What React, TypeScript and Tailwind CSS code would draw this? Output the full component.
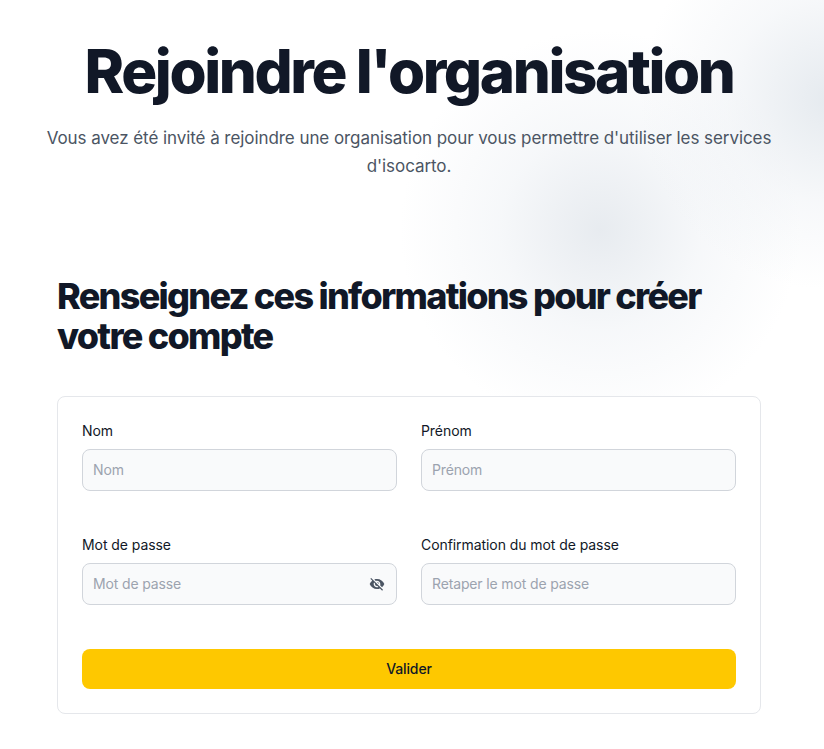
import React from "react";

function EyeOff() {
  return (
    <svg viewBox="0 0 24 24" className="h-4 w-4 text-[#4b5563]" fill="currentColor" aria-hidden="true">
      <path d="M12 7c2.76 0 5 2.24 5 5 0 .65-.13 1.26-.36 1.83l2.92 2.92c1.51-1.26 2.7-2.89 3.43-4.75-1.73-4.39-6-7.5-11-7.5-1.4 0-2.74.25-3.98.7l2.16 2.16C10.74 7.13 11.35 7 12 7zM2 4.27l2.28 2.28.46.46C3.08 8.3 1.78 10.02 1 12c1.73 4.39 6 7.5 11 7.5 1.55 0 3.03-.3 4.38-.84l.42.42L19.73 22 21 20.73 3.27 3 2 4.27zM7.53 9.8l1.55 1.55c-.05.21-.08.43-.08.65 0 1.66 1.34 3 3 3 .22 0 .44-.03.65-.08l1.55 1.55c-.67.33-1.41.53-2.2.53-2.76 0-5-2.24-5-5 0-.79.2-1.53.53-2.2zm4.31-.78l3.15 3.15.02-.16c0-1.66-1.34-3-3-3l-.17.01z" />
    </svg>
  );
}

function Field({ label, placeholder, icon }: { label: string; placeholder: string; icon?: boolean }) {
  return (
    <div className="flex flex-col">
      <label className="mb-[8px] text-[14px] leading-[20px] font-normal tracking-[-0.005em] text-[#111827]">{label}</label>
      <div className="relative">
        <input
          placeholder={placeholder}
          className="h-[42px] w-full rounded-lg border border-[#d1d5db] bg-[#f9fafb] px-[10px] pb-[1px] text-[14px] tracking-[-0.01em] text-[#111827] placeholder:text-[#9ca3af]"
        />
        {icon && (
          <span className="absolute right-[12px] top-[13px]">
            <EyeOff />
          </span>
        )}
      </div>
    </div>
  );
}

export default function App() {
  return (
    <div className="relative h-[749px] w-full overflow-hidden bg-white font-['Inter',sans-serif]">
      <div className="absolute left-[400px] top-[30px] h-[400px] w-[400px] rounded-full bg-[radial-gradient(closest-side,rgba(212,219,227,0.55),rgba(228,233,239,0.33)_50%,rgba(255,255,255,0))]" />
      <div className="absolute left-[640px] top-[-90px] h-[380px] w-[380px] rounded-full bg-[radial-gradient(closest-side,rgba(212,220,228,0.6),rgba(228,233,239,0.3)_55%,rgba(255,255,255,0))]" />
      <div className="relative flex w-[818px] flex-col items-center">
        <h1 className="mt-[35px] text-center text-[60px] leading-[72px] font-[850] tracking-[-2.4px] whitespace-nowrap text-[#111827]">
          Rejoindre l'organisation
        </h1>
        <p className="mt-[17px] w-[760px] text-center text-[17px] leading-[28px] font-normal tracking-[-0.067px] text-[#4b5563]">
          Vous avez été invité à rejoindre une organisation pour vous permettre d'utiliser les services d'isocarto.
        </p>
        <div className="mt-[96px] w-[704px]">
          <h2 className="text-[36px] leading-[40px] font-extrabold tracking-[-1.73px] text-[#111827]">
            Renseignez ces informations pour créer votre compte
          </h2>
          <form className="mt-[40px] rounded-lg border border-[#e5e7eb] bg-white p-[24px]">
            <div className="grid grid-cols-2 gap-x-[24px] gap-y-[44px]">
              <Field label="Nom" placeholder="Nom" />
              <Field label="Prénom" placeholder="Prénom" />
              <Field label="Mot de passe" placeholder="Mot de passe" icon />
              <Field label="Confirmation du mot de passe" placeholder="Retaper le mot de passe" />
            </div>
            <button
              type="button"
              className="mt-[44px] block h-[40px] w-full rounded-lg bg-[#fec800] pb-[1px] text-[14px] font-medium tracking-[-0.01em] text-[#111827]"
            >
              Valider
            </button>
          </form>
        </div>
      </div>
    </div>
  );
}
